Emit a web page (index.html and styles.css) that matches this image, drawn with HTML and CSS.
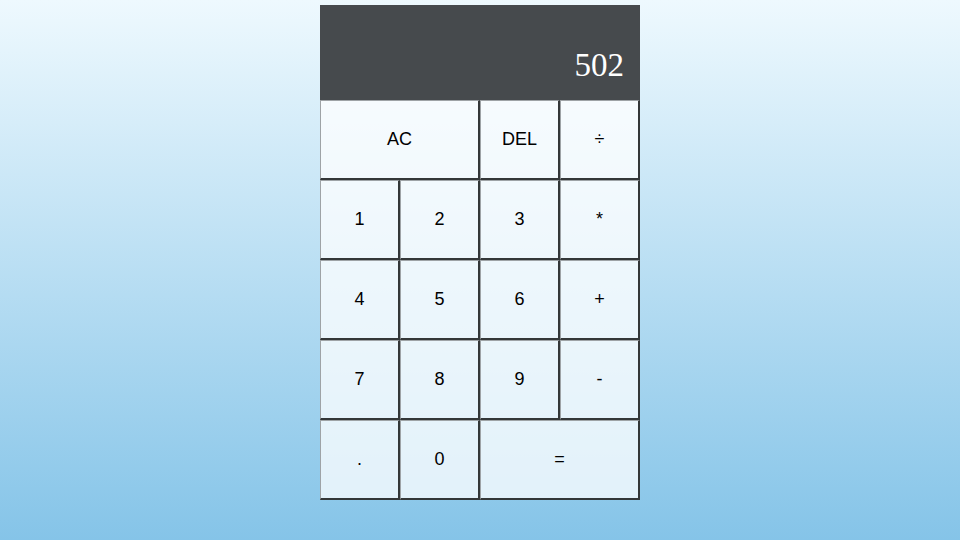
FILE: index.html
```html
<!DOCTYPE html>
<html>
<head>
<meta charset="utf-8">
<link rel="stylesheet" href="styles.css">
</head>
<body>
<div class="calc">
  <div class="output"><div class="current">502</div></div>
  <button class="btn span-two">AC</button>
  <button class="btn">DEL</button>
  <button class="btn">÷</button>
  <button class="btn">1</button>
  <button class="btn">2</button>
  <button class="btn">3</button>
  <button class="btn">*</button>
  <button class="btn">4</button>
  <button class="btn">5</button>
  <button class="btn">6</button>
  <button class="btn">+</button>
  <button class="btn">7</button>
  <button class="btn">8</button>
  <button class="btn">9</button>
  <button class="btn">-</button>
  <button class="btn">.</button>
  <button class="btn">0</button>
  <button class="btn span-two">=</button>
</div>
</body>
</html>
```
FILE: styles.css
```css
html, body {
  margin: 0;
  padding: 0;
  height: 100%;
}
body {
  background: linear-gradient(to bottom, #eef9fe 0%, #85c4e8 100%);
  font-family: "Liberation Sans", Arial, sans-serif;
}
.calc {
  display: grid;
  justify-content: center;
  grid-template-columns: repeat(4, 80px);
  grid-template-rows: 95px repeat(5, 80px);
  padding-top: 5px;
}
.output {
  grid-column: 1 / -1;
  background: #464a4d;
  display: flex;
  align-items: flex-end;
  justify-content: flex-end;
  padding: 0 16px 18px 0;
}
.current {
  color: #ffffff;
  font-family: "Liberation Serif", "Times New Roman", serif;
  font-size: 33px;
  line-height: 1;
}
.btn {
  box-sizing: border-box;
  margin: 0;
  padding: 0;
  font-family: "Liberation Sans", Arial, sans-serif;
  font-size: 18px;
  color: #000;
  background: rgba(255, 255, 255, 0.75);
  border-style: solid;
  border-width: 1px 2px 2px 1px;
  border-top-color: #9ea3a6;
  border-left-color: #9ea3a6;
  border-right-color: #333738;
  border-bottom-color: #333738;
}
.span-two {
  grid-column: span 2;
}
```
